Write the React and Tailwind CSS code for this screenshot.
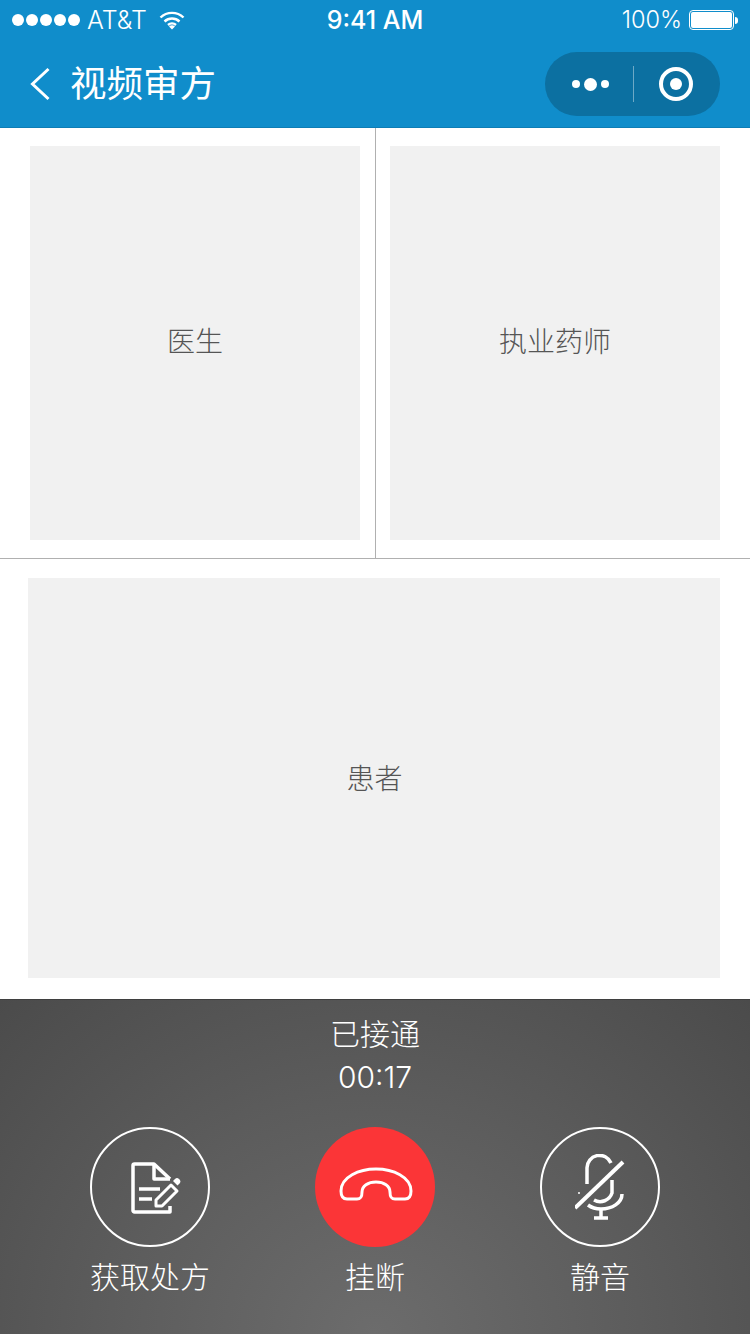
import React from "react";

const CJK = "font-['Noto_Sans_CJK_SC','Noto_Sans',sans-serif]";

const StatusBar = () => (
  <div className="h-10 flex items-center justify-between pl-3 pr-[12px] text-white font-['Inter',sans-serif]">
    <div className="flex-1 flex items-center">
      <div className="flex gap-[2px]">
        {[0, 1, 2, 3, 4].map((i) => (
          <span key={i} className="w-[12px] h-[12px] rounded-full bg-white" />
        ))}
      </div>
      <span className="ml-[7px] text-[25px] font-light leading-none">AT&amp;T</span>
      <svg className="ml-[12px]" width="26" height="20" viewBox="0 0 26 20" fill="none" stroke="white" strokeWidth="2.4">
        <path d="M1.5 7.5a16.5 16.5 0 0 1 23 0" />
        <path d="M5.5 11.5a11 11 0 0 1 15 0" />
        <path d="M9 15a6 6 0 0 1 8 0" />
        <path d="M13 19.5l-3-3a4.5 4.5 0 0 1 6 0z" fill="white" stroke="none" />
      </svg>
    </div>
    <span className="text-[25px] font-medium leading-none">9:41 AM</span>
    <div className="flex-1 flex items-center justify-end">
      <span className="text-[23.5px] font-light leading-none">100%</span>
      <div className="ml-[7px] w-[45px] h-[20px] rounded-[4px] border border-white p-[1px]">
        <div className="w-full h-full rounded-[2px] bg-white" />
      </div>
      <div className="ml-[1px] w-[3px] h-[7px] rounded-r-full bg-white" />
    </div>
  </div>
);

const Header = () => (
  <div className="h-[128px] bg-[#108dcb] border-b border-[#0e7db5]">
    <StatusBar />
    <div className="h-[88px] flex items-center pl-[30px] pr-[30px]">
      <svg width="20" height="34" viewBox="0 0 20 34" fill="none" stroke="white" strokeWidth="3">
        <path d="M18.5 2L2.5 17l16 15" />
      </svg>
      <span className={`ml-[20px] mb-[3px] text-[36.5px] leading-none text-white font-normal ${CJK}`}>视频审方</span>
      <div className="ml-auto w-[175px] h-16 rounded-full bg-[#0c70a1] flex items-center">
        <div className="w-[88px] flex items-center justify-center gap-[4px] pl-[3px]">
          <span className="w-2 h-2 rounded-full bg-white" />
          <span className="w-[13px] h-[13px] rounded-full bg-white" />
          <span className="w-2 h-2 rounded-full bg-white" />
        </div>
        <div className="w-px h-9 bg-white/40" />
        <div className="flex-1 flex items-center justify-center pr-[2px]">
          <div className="w-[34px] h-[34px] rounded-full border-4 border-white flex items-center justify-center">
            <span className="w-[12px] h-[12px] rounded-full bg-white" />
          </div>
        </div>
      </div>
    </div>
  </div>
);

const VideoBox = ({ label, className }) => (
  <div className={`bg-[#f1f1f1] flex items-center justify-center text-[28px] font-light text-[#555] ${CJK} ${className}`}>
    {label}
  </div>
);

const PrescriptionIcon = () => (
  <svg className="ml-[11px] mt-[2px]" width="50" height="52" viewBox="0 0 50 52" fill="none" stroke="white" strokeWidth="3.5" strokeLinejoin="round">
    <path d="M39 17L23 2H3.500a1.500 1.500 0 0 0-1.500 1.500v45a1.500 1.500 0 0 0 1.500 1.500H39v-6" />
    <path d="M23 2v15h16" />
    <path d="M8 27h21M8 37h13" />
    <path d="M25 44v-6l15-15 6 6-15 15z" strokeWidth="3" />
    <path d="M42 19l2-2a3 3 0 0 1 4 0l.5.5a3 3 0 0 1 0 4L46.500 23.500z" fill="white" stroke="none" />
  </svg>
);

const HangupIcon = () => (
  <svg className="ml-[2px] -mt-[7px]" width="74" height="34" viewBox="0 0 74 34" fill="none" stroke="white" strokeWidth="3" strokeLinejoin="round">
    <path d="M2 24C2 10 20 2 37 2s35 8 35 22c0 5-2 8-6 8H56c-4 0-5-2-5-7 0-6-6-10-14-10s-14 4-14 10c0 5-1 7-5 7H8c-4 0-6-3-6-8z" />
  </svg>
);

const MuteIcon = () => (
  <svg className="-ml-[1px]" width="50" height="66" viewBox="0 0 50 66" fill="none" stroke="white" strokeWidth="3.5">
    <path d="M12 30V14a12.500 12.500 0 0 1 24-5" />
    <path d="M37 26v13a12.500 12.500 0 0 1-18 7" />
    <path d="M13 51c4 3 8 4 13 4 11 0 21-6 21-15" />
    <path d="M26 55v8M19 64h14" />
    <path d="M48 8L0 54" strokeWidth="4" />
    <path d="M3 39h2" strokeWidth="1.500" />
  </svg>
);

const CallButton = ({ label, className, children }) => (
  <div className="w-[225px] flex flex-col items-center">
    <div className={`w-[120px] h-[120px] rounded-full flex items-center justify-center ${className}`}>
      {children}
    </div>
    <span className={`mt-[9px] text-[30px] leading-[38px] font-light text-white whitespace-nowrap ${CJK}`}>{label}</span>
  </div>
);

const App = () => {
  return (
    <div className="w-[750px] h-[1334px] bg-white flex flex-col overflow-hidden">
      <Header />

      <div className="h-[431px] flex border-b border-[#b0b0b0]">
        <div className="w-[376px] border-r border-[#b0b0b0] pt-[18px] pl-[30px]">
          <VideoBox label="医生" className="w-[330px] h-[394px] pb-[6px]" />
        </div>
        <div className="flex-1 pt-[18px] pl-[14px]">
          <VideoBox label="执业药师" className="w-[330px] h-[394px] pb-[6px]" />
        </div>
      </div>

      <div className="h-[440px] pt-[19px] pl-[28px]">
        <VideoBox label="患者" className="w-[692px] h-[400px] pl-[1px] pb-[2px]" />
      </div>

      <div className="flex-1 border-t border-[#3f3f3f] bg-[radial-gradient(ellipse_at_50%_100%,#6c6c6c_0%,#5c5c5c_50%,#4b4b4b_100%)] flex flex-col items-center">
        <div className={`mt-[12px] text-[30px] leading-[40px] font-light text-white ${CJK}`}>已接通</div>
        <div className="mt-[5px] text-[30px] leading-[40px] font-light text-white font-['Inter',sans-serif]">00:17</div>
        <div className="mt-[30px] flex justify-center">
          <CallButton label="获取处方" className="border-2 border-white">
            <PrescriptionIcon />
          </CallButton>
          <CallButton label="挂断" className="bg-[#fb3537]">
            <HangupIcon />
          </CallButton>
          <CallButton label="静音" className="border-2 border-white">
            <MuteIcon />
          </CallButton>
        </div>
      </div>
    </div>
  );
};

export default App;
